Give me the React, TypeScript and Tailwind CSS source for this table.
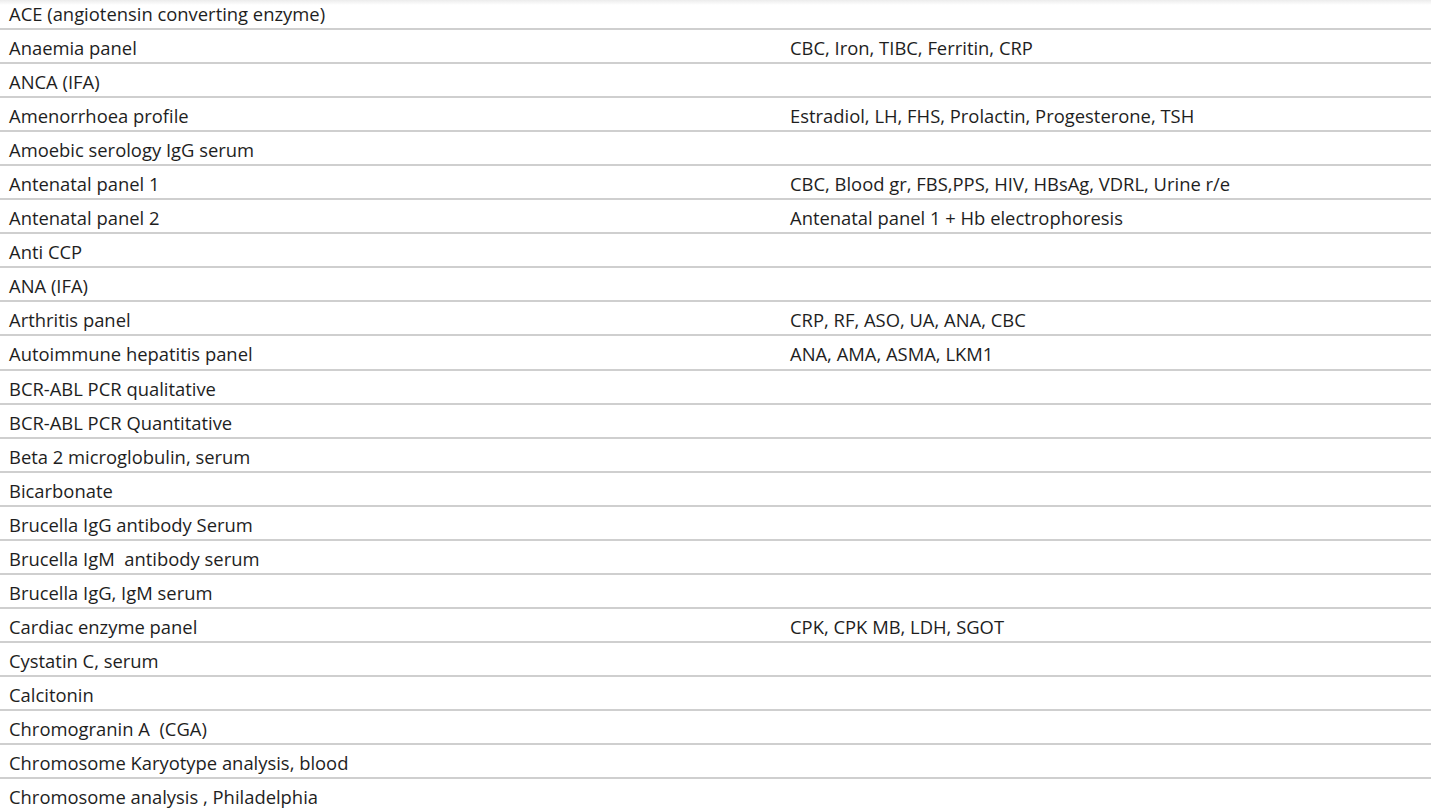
const rows: [string, string][] = [
  ["ACE (angiotensin converting enzyme)", ""],
  ["Anaemia panel", "CBC, Iron, TIBC, Ferritin, CRP"],
  ["ANCA (IFA)", ""],
  ["Amenorrhoea profile", "Estradiol, LH, FHS, Prolactin, Progesterone, TSH"],
  ["Amoebic serology IgG serum", ""],
  ["Antenatal panel 1", "CBC, Blood gr, FBS,PPS, HIV, HBsAg, VDRL, Urine r/e"],
  ["Antenatal panel 2", "Antenatal panel 1 + Hb electrophoresis"],
  ["Anti CCP", ""],
  ["ANA (IFA)", ""],
  ["Arthritis panel", "CRP, RF, ASO, UA, ANA, CBC"],
  ["Autoimmune hepatitis panel", "ANA, AMA, ASMA, LKM1"],
  ["BCR-ABL PCR qualitative", ""],
  ["BCR-ABL PCR Quantitative", ""],
  ["Beta 2 microglobulin, serum", ""],
  ["Bicarbonate", ""],
  ["Brucella IgG antibody Serum", ""],
  ["Brucella IgM\u00a0 antibody serum", ""],
  ["Brucella IgG, IgM serum", ""],
  ["Cardiac enzyme panel", "CPK, CPK MB, LDH, SGOT"],
  ["Cystatin C, serum", ""],
  ["Calcitonin", ""],
  ["Chromogranin A\u00a0 (CGA)", ""],
  ["Chromosome Karyotype analysis, blood", ""],
  ["Chromosome analysis , Philadelphia", ""],
];

export default function App() {
  return (
    <div className="relative h-[810px] w-full overflow-hidden bg-white text-[#1e1e1e] font-['Open_Sans','Noto_Sans',sans-serif]">
      <div className="pointer-events-none absolute inset-x-0 top-0 h-[5px] bg-gradient-to-b from-[#ececec] to-transparent" />
      <div className="-mt-[4px]">
        {rows.map(([name, tests], i) => (
          <div
            key={i}
            className="flex h-[34.05px] border-b-2 border-[#cfcfcf] pt-[6px] text-[18.4px] leading-[24px]"
          >
            <div className="w-[781px] shrink-0 pl-[9px]">{name}</div>
            <div className="flex-1 pl-[9px]">{tests}</div>
          </div>
        ))}
      </div>
    </div>
  );
}
